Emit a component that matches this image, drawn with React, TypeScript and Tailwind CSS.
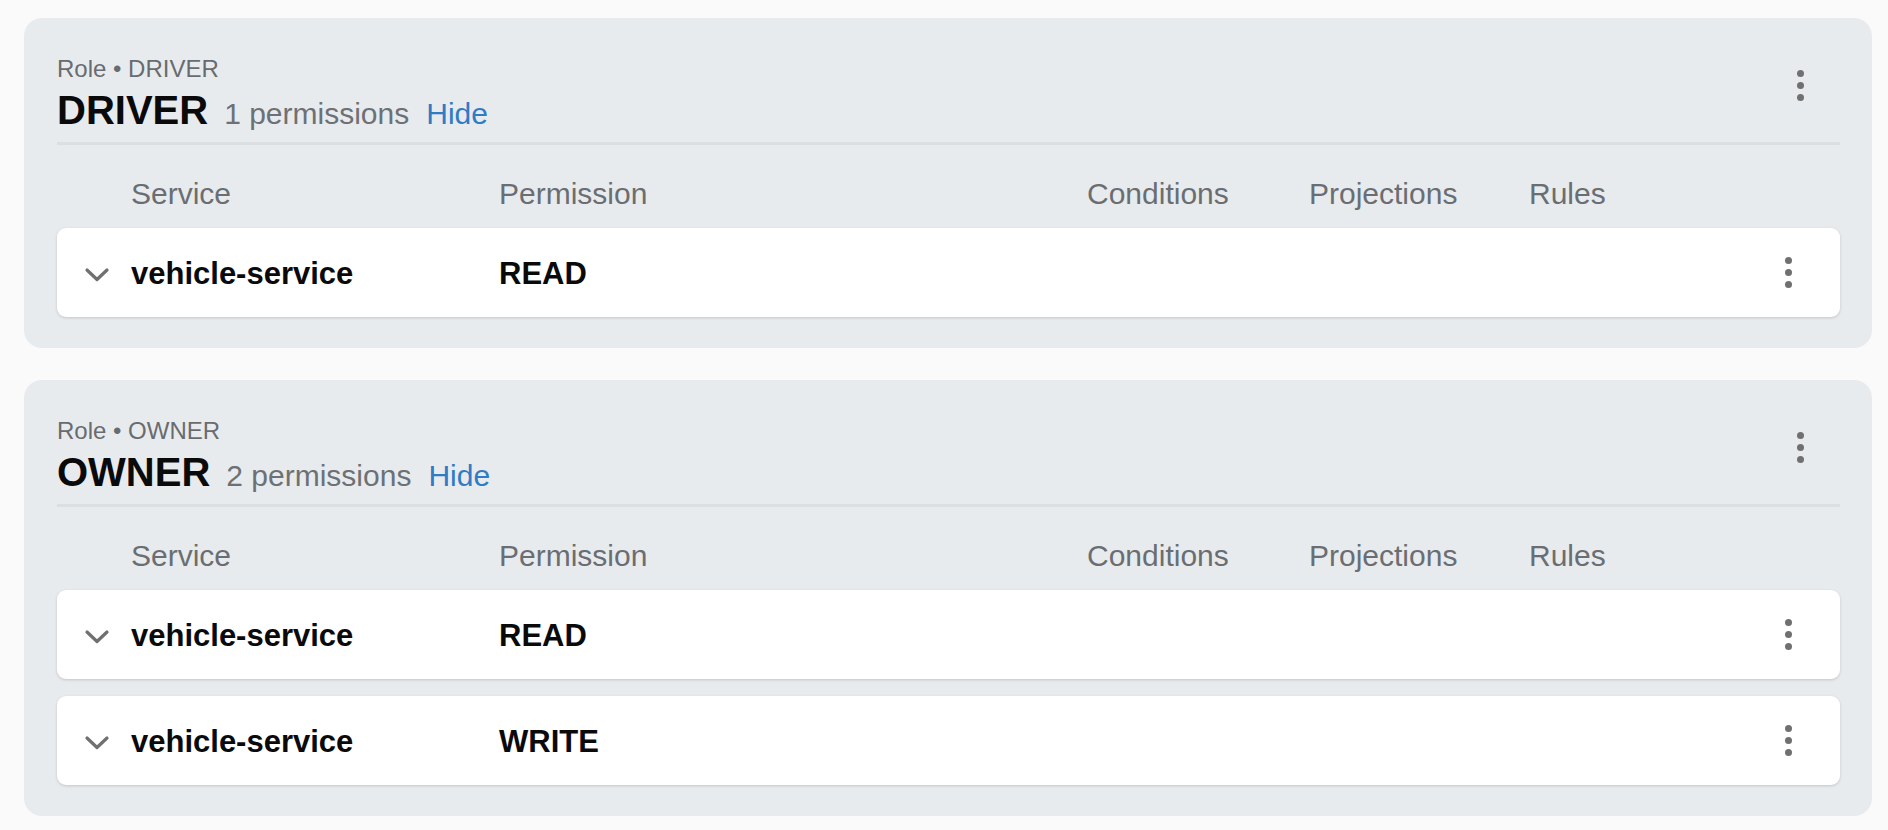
import React from "react";

const FONT = { fontFamily: '"Liberation Sans", Arial, Helvetica, sans-serif' };

function Dots() {
  return (
    <div className="flex flex-col items-center gap-[5px]">
      <span className="block h-[7px] w-[7px] rounded-full bg-[#707070]" />
      <span className="block h-[7px] w-[7px] rounded-full bg-[#707070]" />
      <span className="block h-[7px] w-[7px] rounded-full bg-[#707070]" />
    </div>
  );
}

function Chevron() {
  return (
    <svg width="26" height="16" viewBox="0 0 26 16" fill="none">
      <polyline points="3,3 13,12.5 23,3" stroke="#707070" strokeWidth="3.2" strokeLinecap="round" strokeLinejoin="round" fill="none" />
    </svg>
  );
}

const GRID = "grid grid-cols-[74px_368px_588px_222px_220px_1fr] items-center";

type Perm = { service: string; permission: string };

function RoleCard({ name, perms }: { name: string; perms: Perm[] }) {
  return (
    <div className="rounded-[18px] bg-[#e8ebee] px-[33px] pb-[31px] pt-[37px] pr-[32px]">
      <div className="flex items-start justify-between">
        <div className="flex flex-col">
          <div className="text-[24px] leading-[28px] text-[#686c70]">Role • {name}</div>
          <div className="mt-[3px] flex items-baseline">
            <span className="text-[40px] font-bold leading-[48px] text-[#0a0a0a]">{name}</span>
            <span className="ml-[16px] text-[30px] leading-[36px] text-[#6d7175]">
              {perms.length} permissions
            </span>
            <span className="ml-[17px] text-[30px] leading-[36px] text-[#2f7bc4]">Hide</span>
          </div>
        </div>
        <div className="mr-[24px] mt-[10px] flex h-[40px] w-[32px] items-center justify-center">
          <Dots />
        </div>
      </div>
      <div className="mt-[8px] h-[3px] bg-[#dcdfe2]" />
      <div className={GRID + " mt-[31px] text-[30px] leading-[36px] text-[#6a6e72]"}>
        <div />
        <div>Service</div>
        <div>Permission</div>
        <div>Conditions</div>
        <div>Projections</div>
        <div>Rules</div>
      </div>
      <div className="mt-[16px] flex flex-col gap-[17px]">
        {perms.map((p, i) => (
          <div
            key={i}
            className={GRID + " h-[89px] rounded-[9px] bg-white shadow-[0_1px_3px_rgba(0,0,0,0.16)]"}
          >
            <div className="flex justify-start pl-[27px] pt-[4px]">
              <Chevron />
            </div>
            <div className="pt-[4px] text-[31px] font-bold text-[#0a0a0a]">{p.service}</div>
            <div className="pt-[4px] text-[31px] font-bold text-[#0a0a0a]">{p.permission}</div>
            <div />
            <div />
            <div className="flex justify-end pr-[48px]">
              <Dots />
            </div>
          </div>
        ))}
      </div>
    </div>
  );
}

export default function App() {
  return (
    <div style={FONT} className="min-h-[830px] w-full bg-[#fafafa] pl-[24px] pr-[16px] pt-[18px]">
      <div className="flex flex-col gap-[32px]">
        <RoleCard name="DRIVER" perms={[{ service: "vehicle-service", permission: "READ" }]} />
        <RoleCard
          name="OWNER"
          perms={[
            { service: "vehicle-service", permission: "READ" },
            { service: "vehicle-service", permission: "WRITE" },
          ]}
        />
      </div>
    </div>
  );
}
